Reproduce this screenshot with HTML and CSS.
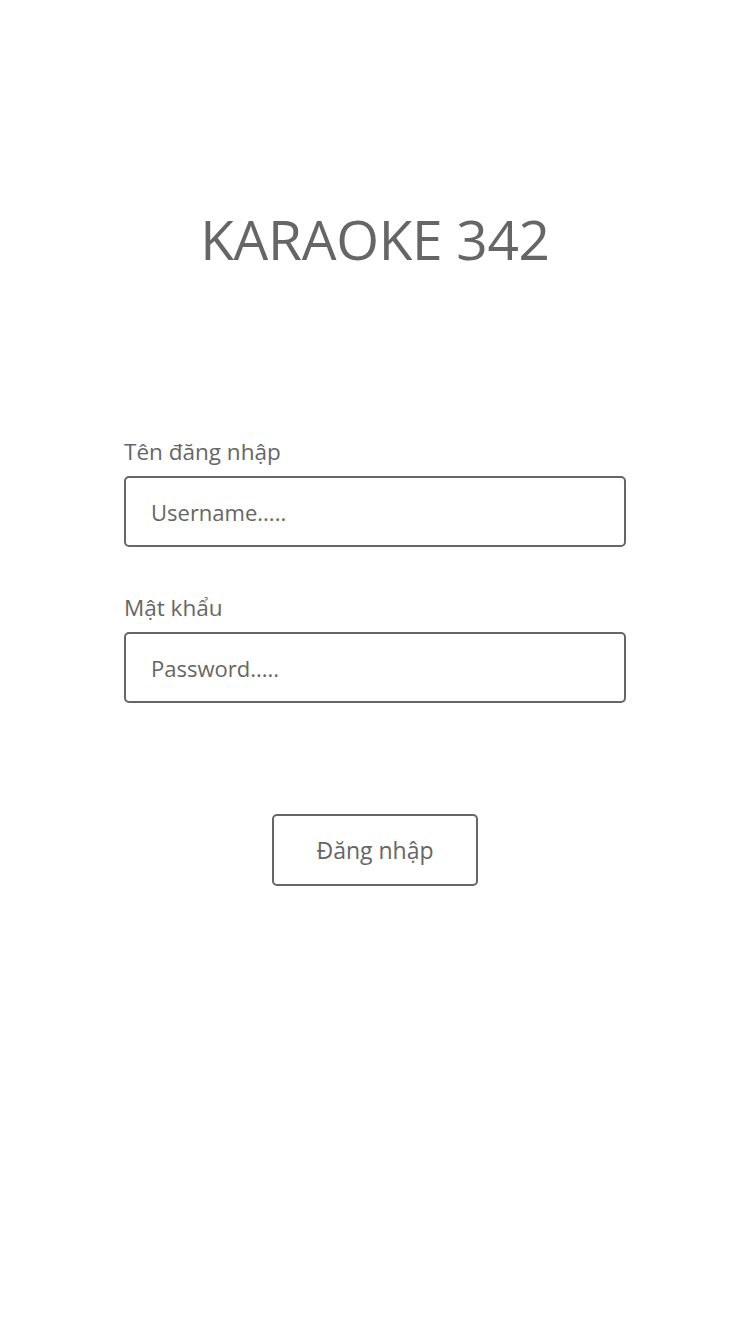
FILE: index.html
```html
<!DOCTYPE html>
<html lang="vi">
<head>
<meta charset="utf-8">
<title>KARAOKE 342</title>
<link rel="stylesheet" href="styles.css">
</head>
<body>
<main class="page">
  <h1 class="title">KARAOKE 342</h1>
  <form class="form">
    <label class="field">
      <span class="label">Tên đăng nhập</span>
      <input class="input" type="text" placeholder="Username.....">
    </label>
    <label class="field">
      <span class="label">Mật khẩu</span>
      <input class="input" type="password" placeholder="Password.....">
    </label>
    <div class="actions">
      <button class="button" type="button">Đăng nhập</button>
    </div>
  </form>
</main>
</body>
</html>
```

FILE: styles.css
```css
* { box-sizing: border-box; }
html, body { margin: 0; padding: 0; background: #fff; }
body {
  font-family: "Open Sans", "Noto Sans", sans-serif;
  color: #666;
  width: 750px;
  height: 1334px;
}
.page {
  display: flex;
  flex-direction: column;
  align-items: center;
  padding-top: 211px;
}
.title {
  margin: 0;
  font-size: 55px;
  line-height: 55px;
  font-weight: 400;
  color: #666;
  letter-spacing: -0.3px;
}
.form {
  width: 502px;
  margin-top: 171px;
  display: flex;
  flex-direction: column;
  gap: 46px;
}
.field {
  display: flex;
  flex-direction: column;
  gap: 9px;
}
.label {
  font-size: 22.5px;
  line-height: 30px;
  color: #666;
}
.input {
  width: 100%;
  height: 71px;
  border: 2px solid #666;
  border-radius: 5px;
  padding: 0 25px;
  font-family: inherit;
  font-size: 22px;
  color: #666;
  background: #fff;
  outline: none;
}
.input::placeholder { color: #666; opacity: 1; }
.actions {
  display: flex;
  justify-content: center;
  margin-top: 65px;
}
.button {
  width: 206px;
  height: 72px;
  border: 2px solid #666;
  border-radius: 5px;
  background: #fff;
  font-family: inherit;
  font-size: 23px;
  color: #666;
  padding: 0;
}
```
